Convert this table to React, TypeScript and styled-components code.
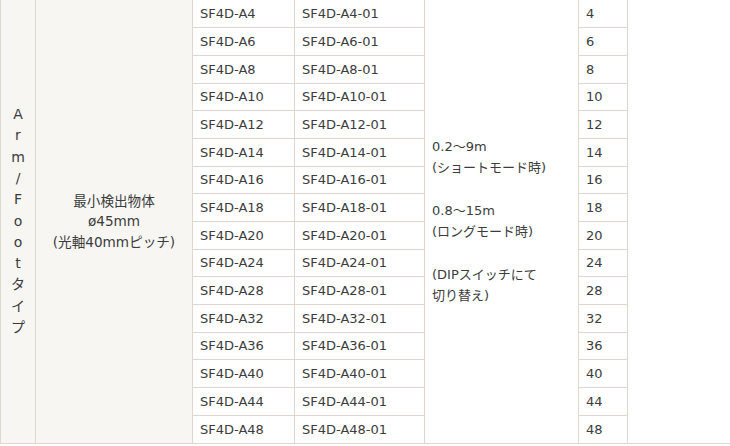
import React from "react";
import styled, { createGlobalStyle } from "styled-components";

const GlobalStyle = createGlobalStyle`
  html, body {
    margin: 0;
    padding: 0;
    background: #ffffff;
  }
  body {
    font-family: "DejaVu Sans", "Noto Sans CJK JP", sans-serif;
    color: #3c3c3c;
  }
`;

const Section = styled.div`
  width: 730px;
  border-bottom: 1px solid #ddd8ce;
  overflow: hidden;
`;

const SpecTable = styled.table`
  border-collapse: collapse;
  table-layout: fixed;
  width: 627px;
  margin-bottom: -1px;
  font-size: 13px;
`;

const Col = styled.col<{ $w: number }>`
  width: ${(props) => props.$w}px;
`;

const Row = styled.tr`
  height: 27.7px;

  &:first-child td {
    border-top: none;
  }
`;

const Cell = styled.td<{ $shade?: boolean; $center?: boolean }>`
  border: 1px solid #ddd8ce;
  padding: 0 7px;
  vertical-align: middle;
  background: ${(props) => (props.$shade ? "#f7f6f3" : "#ffffff")};
  text-align: ${(props) => (props.$center ? "center" : "left")};
  line-height: 21.3px;
  white-space: nowrap;
`;

const TypeCell = styled(Cell)`
  padding: 0;
`;

const VerticalLabel = styled.div`
  display: flex;
  flex-direction: column;
  align-items: center;
  font-size: 14px;
  line-height: 21.3px;
`;

const ObjectText = styled.div`
  font-size: 13.6px;
  line-height: 20.5px;
`;

const columns = [35, 157, 102, 130, 154, 49];

const models = [4, 6, 8, 10, 12, 14, 16, 18, 20, 24, 28, 32, 36, 40, 44, 48];

const label = "Arm/Footタイプ".split("");

export default function App() {
  return (
    <>
      <GlobalStyle />
      <Section>
        <SpecTable>
          <colgroup>
            {columns.map((w, i) => (
              <Col key={`col-${i}`} $w={w} />
            ))}
          </colgroup>
          <tbody>
            {models.map((n, index) => (
              <Row key={`model-${n}`}>
                {index === 0 && (
                  <>
                    <TypeCell $shade rowSpan={models.length}>
                      <VerticalLabel>
                        {label.map((ch, i) => (
                          <span key={`ch-${i}`}>{ch}</span>
                        ))}
                      </VerticalLabel>
                    </TypeCell>
                    <Cell $shade $center rowSpan={models.length}>
                      <ObjectText>
                        最小検出物体
                        <br />
                        ø45mm
                        <br />
                        (光軸40mmピッチ)
                      </ObjectText>
                    </Cell>
                  </>
                )}
                <Cell>SF4D-A{n}</Cell>
                <Cell>SF4D-A{n}-01</Cell>
                {index === 0 && (
                  <Cell rowSpan={models.length}>
                    0.2～9m
                    <br />
                    (ショートモード時)
                    <br />
                    <br />
                    0.8～15m
                    <br />
                    (ロングモード時)
                    <br />
                    <br />
                    (DIPスイッチにて
                    <br />
                    切り替え)
                  </Cell>
                )}
                <Cell>{n}</Cell>
              </Row>
            ))}
          </tbody>
        </SpecTable>
      </Section>
    </>
  );
}
